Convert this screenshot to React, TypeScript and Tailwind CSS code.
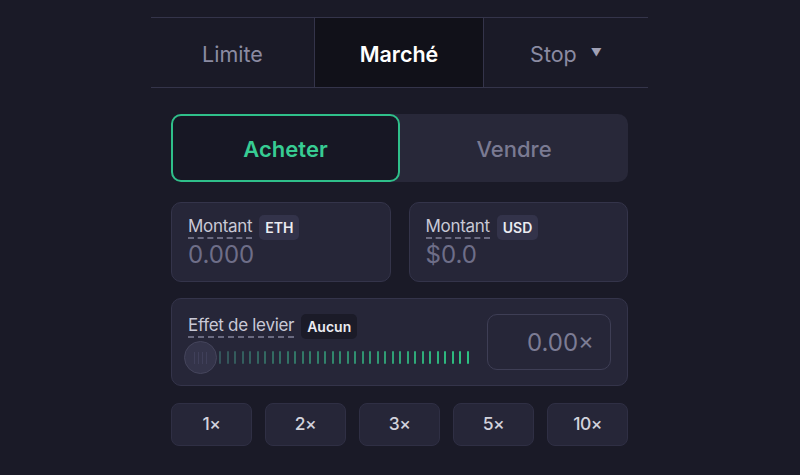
import React, { useState } from 'react';

const ticks = Array.from({ length: 34 }, (_, i) => i);

const Label: React.FC<{ text: string; badge: string; dark?: boolean }> = ({ text, badge, dark }) => (
  <div className="flex items-center gap-[7px]">
    <span className="text-[17px] leading-[20px] tracking-[-0.3px] text-[#c9c9d6] border-b-2 border-dashed border-[#6a6a80] pb-[1px]">
      {text}
    </span>
    <span
      className={`text-[14px] leading-[17px] font-semibold text-[#ececf2] rounded-[5px] px-[6px] py-[4px] ${
        dark ? 'bg-[#1b1b28]' : 'bg-[#33334a]'
      }`}
    >
      {badge}
    </span>
  </div>
);

export default function App() {
  const [tab, setTab] = useState('market');
  const [side, setSide] = useState<'buy' | 'sell'>('buy');

  return (
    <div className="w-[800px] h-[475px] bg-[#1a1a27] overflow-hidden" style={{ fontFamily: 'Inter, "Noto Sans", sans-serif' }}>
      <div className="w-[497px] ml-[151px] pt-[17px]">
        <div className="grid grid-cols-[163px_170px_164px] h-[71px] border-y border-[#34344a]">
          <button
            onClick={() => setTab('limit')}
            className="flex items-center justify-center pt-[3px] text-[21.5px] text-[#8b8ba2]"
          >
            Limite
          </button>
          <button
            onClick={() => setTab('market')}
            className={`flex items-center justify-center pt-[3px] text-[21.5px] font-semibold text-white border-x border-[#34344a] ${
              tab === 'market' ? 'bg-[#111119]' : ''
            }`}
          >
            Marché
          </button>
          <button
            onClick={() => setTab('stop')}
            className="flex items-center justify-center gap-[14px] pt-[3px] text-[21.5px] text-[#8b8ba2]"
          >
            <span>Stop</span>
            <span className="text-[11px] text-[#a0a0b4] -mt-[4px]">▼</span>
          </button>
        </div>

        <div className="px-[20px] pt-[26px]">
          <div className="flex h-[68px] rounded-[10px] bg-[#282839]">
            <button
              onClick={() => setSide('buy')}
              className={`w-[229px] rounded-[10px] pt-[3px] text-[22px] font-semibold ${
                side === 'buy' ? 'bg-[#171724] border-2 border-[#2fbf8a] text-[#37cc93]' : 'text-[#7a7a92]'
              }`}
            >
              Acheter
            </button>
            <button
              onClick={() => setSide('sell')}
              className={`flex-1 rounded-[10px] pt-[3px] text-[22px] font-medium ${
                side === 'sell' ? 'bg-[#171724] border-2 border-[#e0525e] text-[#e0525e]' : 'text-[#7a7a92]'
              }`}
            >
              Vendre
            </button>
          </div>

          <div className="grid grid-cols-2 gap-[18px] mt-[20px]">
            <div className="h-[80px] rounded-[10px] bg-[#262638] border border-[#34344a] px-[16px] pt-[12px]">
              <Label text="Montant" badge="ETH" />
              <div className="text-[24px] leading-[28px] text-[#6e6e88] mt-[1px]">0.000</div>
            </div>
            <div className="h-[80px] rounded-[10px] bg-[#262638] border border-[#34344a] px-[16px] pt-[12px]">
              <Label text="Montant" badge="USD" />
              <div className="text-[24px] leading-[28px] text-[#6e6e88] mt-[1px]">$0.0</div>
            </div>
          </div>

          <div className="mt-[16px] h-[88px] rounded-[10px] bg-[#262638] border border-[#34344a] flex items-center justify-between pl-[12px] pr-[16px]">
            <div className="flex flex-col pt-[4px]">
              <div className="pl-[4px]">
                <Label text="Effet de levier" badge="Aucun" dark />
              </div>
              <div className="flex items-center mt-[2px]">
                <div className="w-[33px] h-[33px] rounded-full bg-[#34344a] border border-[#45455c] flex items-center justify-center gap-[3px]">
                  {[0, 1, 2, 3].map((i) => (
                    <span key={i} className="w-[1px] h-[12px] bg-[#40405a]" />
                  ))}
                </div>
                <div className="flex items-center gap-[5.5px] ml-[2px]">
                  {ticks.map((i) => (
                    <span
                      key={i}
                      className="w-[2px] h-[13px] rounded-[1px]"
                      style={{
                        backgroundColor: `rgb(${Math.round(52 - i * 0.2)}, ${Math.round(84 + i * 3.3)}, ${Math.round(90 + i * 1.2)})`,
                      }}
                    />
                  ))}
                </div>
              </div>
            </div>
            <div className="w-[124px] h-[56px] rounded-[10px] border border-[#3e3e55] flex items-center justify-end pr-[16px] pt-[2px] text-[24px] text-[#7c7c94]">
              0.00×
            </div>
          </div>

          <div className="grid grid-cols-5 gap-[13px] mt-[17px]">
            {['1×', '2×', '3×', '5×', '10×'].map((v) => (
              <button
                key={v}
                className="h-[43px] rounded-[8px] bg-[#262638] border border-[#2f2f44] text-[17.5px] font-medium tracking-[-0.5px] text-[#d2d2dc]"
              >
                {v}
              </button>
            ))}
          </div>
        </div>
      </div>
    </div>
  );
}
